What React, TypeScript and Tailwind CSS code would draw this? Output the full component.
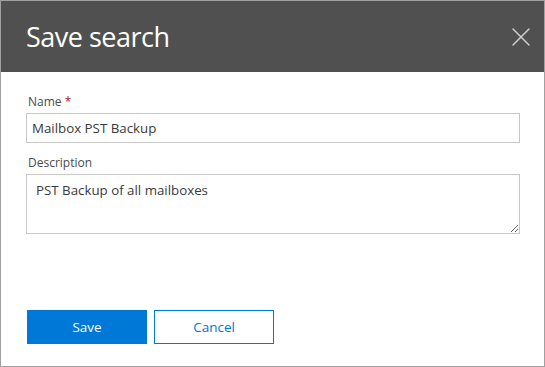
import { X } from 'lucide-react';

export default function App() {
    return (
        <div className="flex h-[367px] w-[545px] flex-col border border-[#a0a0a0] bg-white font-['Open_Sans',sans-serif] text-[#333333]">
            <div className="flex h-[71px] shrink-0 items-center justify-between bg-[#505050] pl-[25px] pr-[7px]">
                <h1 className="text-[27px] font-normal leading-none tracking-[-0.5px] text-white">Save search</h1>
                <X className="h-[32px] w-[32px] text-[#d0d0d0]" strokeWidth={1.1} />
            </div>
            <div className="flex flex-1 flex-col px-[25px] pt-[22px]">
                <label className="mb-[3px] pl-[2px] text-[12px] leading-[16px] text-[#4a4a4a]">
                    Name <span className="text-[#a4262c]">*</span>
                </label>
                <input
                    className="h-[30px] w-[494px] border border-[#c8c8c8] px-[5px] text-[13.3px] text-[#3a3a3a] outline-none"
                    defaultValue="Mailbox PST Backup"
                />
                <label className="mb-[3px] mt-[12px] pl-[2px] text-[12px] leading-[16px] text-[#4a4a4a]">Description</label>
                <textarea
                    className="h-[60px] w-[494px] resize-y border border-[#c8c8c8] px-[9px] py-[5px] text-[13.3px] leading-[20px] text-[#3a3a3a] outline-none"
                    defaultValue="PST Backup of all mailboxes"
                />
                <div className="mt-[76px] flex gap-[7px] pl-[1px]">
                    <button className="h-[34px] w-[120px] bg-[#0078d7] text-[13.5px] text-white">Save</button>
                    <button className="h-[34px] w-[120px] border border-[#0078d7] bg-white text-[13.5px] text-[#0078d7]">
                        Cancel
                    </button>
                </div>
            </div>
        </div>
    );
}
